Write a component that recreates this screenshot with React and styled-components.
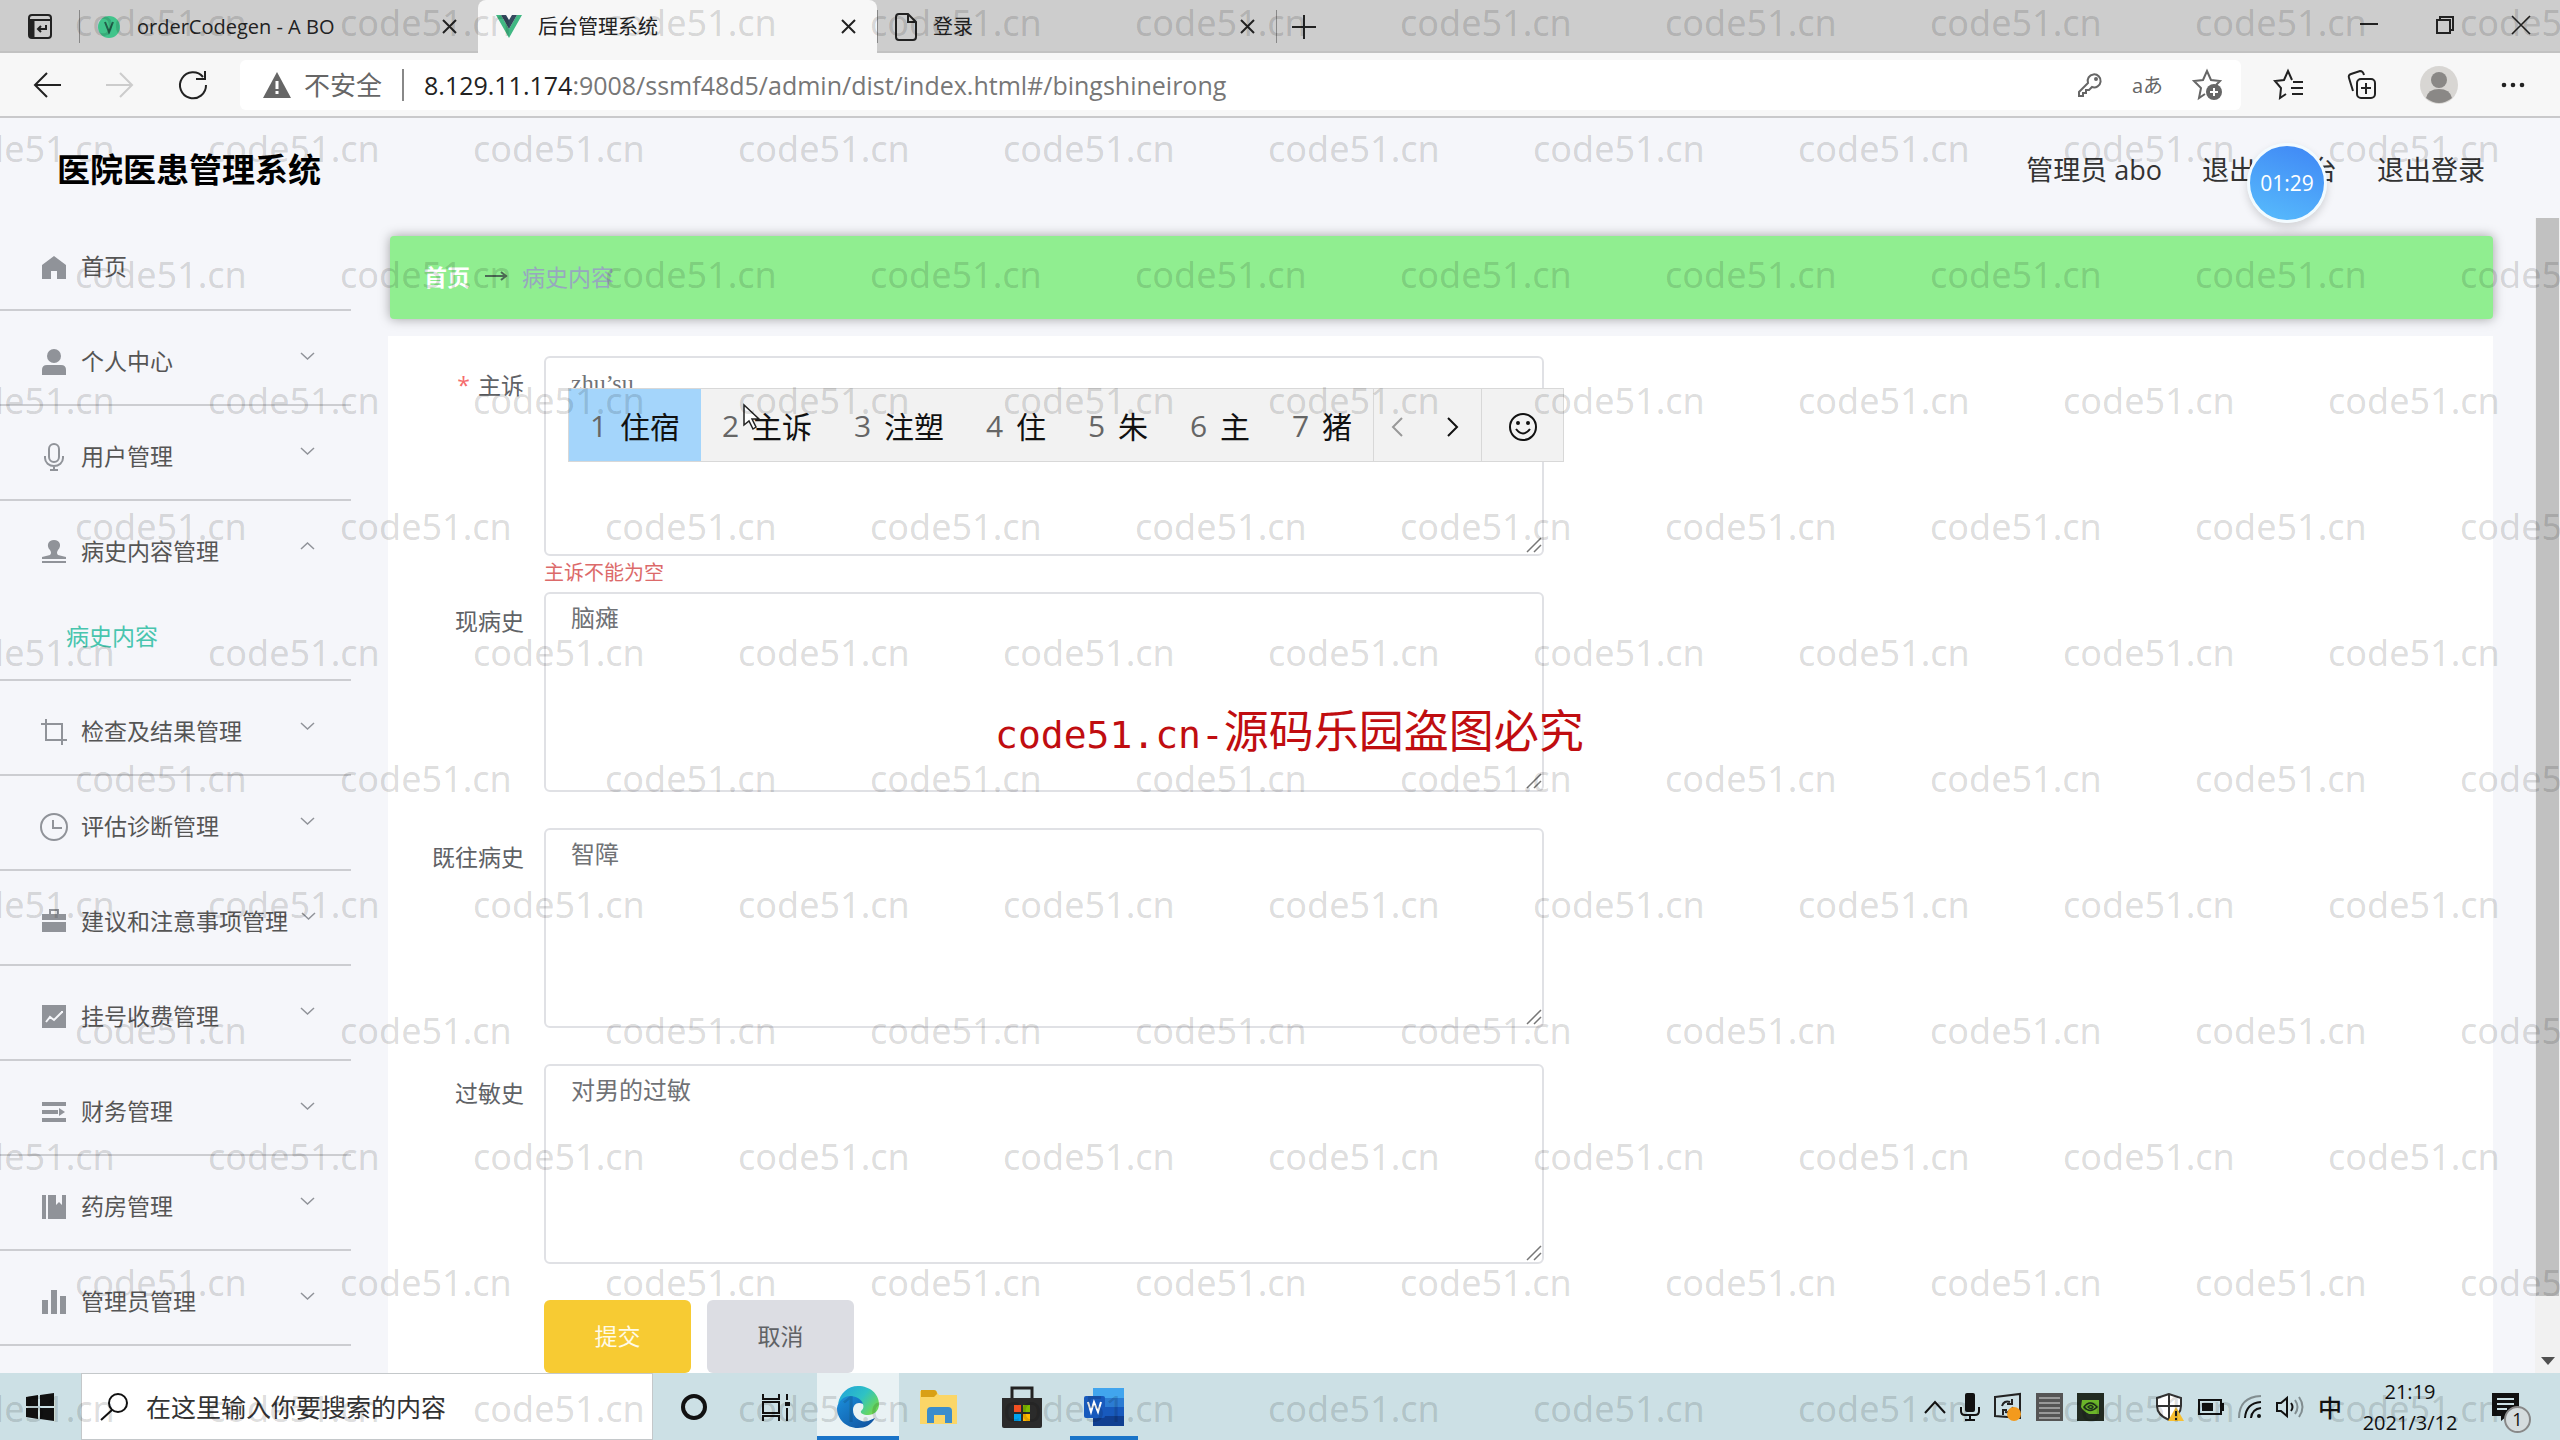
import React from 'react'
import styled, { createGlobalStyle } from 'styled-components'


const menu = [
    { icon: 'home', text: '首页' },
    { icon: 'user', text: '个人中心', more: true },
    { icon: 'mic', text: '用户管理', more: true },
    { icon: 'stamp', text: '病史内容管理', more: true, open: true, child: '病史内容' },
    { icon: 'crop', text: '检查及结果管理', more: true },
    { icon: 'clock', text: '评估诊断管理', more: true },
    { icon: 'bag', text: '建议和注意事项管理', more: true },
    { icon: 'chart', text: '挂号收费管理', more: true },
    { icon: 'list', text: '财务管理', more: true },
    { icon: 'book', text: '药房管理', more: true },
    { icon: 'bars', text: '管理员管理', more: true },
]

const fields = [
    { id: 'zhusu', label: '主诉', value: 'zhu’su', required: true, error: '主诉不能为空', ime: true },
    { id: 'xianbingshi', label: '现病史', value: '脑瘫' },
    { id: 'jiwangbingshi', label: '既往病史', value: '智障' },
    { id: 'guominshi', label: '过敏史', value: '对男的过敏' },
]

const words = ['住宿', '主诉', '注塑', '住', '朱', '主', '猪']

const menuIcons = {
    home: <path d="M12 1 24 10v14h-9v-8H9v8H0V10z" />,
    user: <><circle cx="12" cy="6" r="7" /><path d="M0 25v-5q0-5 5-5h14q5 0 5 5v5z" /></>,
    mic: <g fill="none" stroke="currentColor" strokeWidth="2"><rect x="7" y="-1" width="10" height="18" rx="5" /><path d="M3 11v2a9 8 0 0 0 18 0v-2M12 21v4M8 25h8" /></g>,
    stamp: <><path d="M8 10C4 6 6 0 12 0s8 6 4 10q-2 3 0 5l8 2v2H0v-2l8-2q2-2 0-5z" /><rect y="21" width="24" height="2" /></>,
    crop: <path d="M4-1v21h21M-1 4h21v21" fill="none" stroke="currentColor" strokeWidth="2" />,
    clock: <g fill="none" stroke="currentColor" strokeWidth="2"><circle cx="12" cy="12" r="13" /><path d="M11 5v8h9" /></g>,
    bag: <><path d="M8 4V0h8v4" fill="none" stroke="currentColor" strokeWidth="2" /><rect y="4" width="24" height="6" /><rect y="12" width="24" height="10" /></>,
    chart: <><rect width="24" height="23" /><path d="m4 17 4-5 4 3 8-8M20 6v2" fill="none" stroke="#f5f6fa" strokeWidth="2" /></>,
    list: <path d="M0 2h24v4H0zm0 8h16v4H0zm17-2 6 4-6 4zM0 18h24v4H0z" />,
    book: <path d="M0 0h4v24H0zm6 0h8v10l3-3 3 3V0h4v24H6z" />,
    bars: <path d="M0 10h6v14H0zM9 0h6v24H9zm9 6h6v18h-6z" />,
}

const Icon = ({ w = 24, h = 24, box = '0 0 24 24', line, children }) => (
    <Svg
        width={w}
        height={h}
        viewBox={box}
        fill={line ? 'none' : 'currentColor'}
        stroke={line ? 'currentColor' : 'none'}
        strokeWidth={line}
        aria-hidden="true"
    >
        {children}
    </Svg>
)

const CloseIcon = () => <Icon w={15} h={15} box="0 0 15 15" line={2}><path d="m1 1 13 13M14 1 1 14" /></Icon>

const Browser = () => (
    <>
        <TabBar>
            <TabMenu aria-label="标签页操作">
                <Icon w={26} h={26} box="0 0 26 26" line={2}>
                    <rect x="2" y="1" width="22" height="23" rx="3" />
                    <path d="M2 6h22M19 11v4h-8m3-3-3 3 3 3" />
                    <path d="M5 6v18" strokeWidth="5" />
                </Icon>
            </TabMenu>
            <Tab>
                <Icon w={24} h={24}><circle cx="12" cy="12" r="11" fill="#41c48b" /><path d="m8 7 4 10 4-10" fill="none" stroke="#22604a" strokeWidth="2" /></Icon>
                <TabText>orderCodegen - A BO</TabText>
                <TabClose aria-label="关闭"><CloseIcon /></TabClose>
            </Tab>
            <Tab $active>
                <Icon w={26} h={23} box="0 0 26 23"><path d="M0 0h5l8 14 8-14h5L13 23z" fill="#41b883" /><path d="M5 0h5l3 5 3-5h5l-8 14z" fill="#35495e" /></Icon>
                <TabText>后台管理系统</TabText>
                <TabClose aria-label="关闭"><CloseIcon /></TabClose>
            </Tab>
            <Tab>
                <Icon w={22} h={28} box="0 0 22 28" line={2}><path d="M4 1h9l8 8v15q0 3-3 3H4q-3 0-3-3V4q0-3 3-3zM13 1v8h8" /></Icon>
                <TabText>登录</TabText>
                <TabClose aria-label="关闭"><CloseIcon /></TabClose>
            </Tab>
            <NewTab aria-label="新建标签页"><Icon line={2}><path d="M12 0v24M0 12h24" /></Icon></NewTab>
            <WindowButtons>
                <button aria-label="最小化"><Icon w={18} h={18} box="0 0 18 18" line={2}><path d="M0 8h18" /></Icon></button>
                <button aria-label="还原"><Icon w={18} h={18} box="0 0 18 18" line={2}><path d="M1 4h13v13H1zM4 4V1h13v13h-3" /></Icon></button>
                <button aria-label="关闭窗口"><Icon w={18} h={18} box="0 0 18 18" line={1.6}><path d="m0 0 18 18M18 0 0 18" /></Icon></button>
            </WindowButtons>
        </TabBar>
        <Toolbar>
            <NavButtons>
                <button aria-label="后退"><Icon w={28} h={28} box="0 0 28 28" line={2}><path d="M28 14H2M14 2 2 14l12 12" /></Icon></button>
                <button aria-label="前进" disabled><Icon w={28} h={28} box="0 0 28 28" line={2}><path d="M0 14h26M14 2l12 12-12 12" /></Icon></button>
                <button aria-label="刷新"><Icon w={28} h={28} box="0 0 28 28" line={2}><path d="M24 6A13 13 0 1 0 27 14M26 0v8h-9" /></Icon></button>
            </NavButtons>
            <AddressBar>
                <Icon w={28} h={26} box="0 0 28 26"><path d="M14 0 28 26H0z" /><path d="M14 9v8m0 2v3" stroke="#fff" strokeWidth="3" /></Icon>
                <Unsafe>不安全</Unsafe>
                <Url role="textbox" aria-label="地址" contentEditable suppressContentEditableWarning spellCheck={false}>
                    <b>8.129.11.174</b>:9008/ssmf48d5/admin/dist/index.html#/bingshineirong
                </Url>
                <BarTools>
                    <button aria-label="密码"><Icon w={24} h={24} line={2}><path d="M14 14a6.500 6.500 0 1 0-4-4L1 19v4h4v-3h3v-3h3z" /><circle cx="18" cy="6" r="1" /></Icon></button>
                    <button>aあ</button>
                    <button aria-label="添加收藏"><Icon w={30} h={30} box="0 0 30 30" line={2}><path d="M12 24l-6 4 2-10-7-7 9-1 4-9 4 9 9 1-4 4" /><circle cx="21" cy="22" r="8" fill="currentColor" stroke="none" /><path d="M21 18v8M17 22h8" stroke="#fff" /></Icon></button>
                </BarTools>
            </AddressBar>
            <ToolIcons>
                <button aria-label="收藏夹"><Icon w={30} h={30} box="0 0 30 30" line={2}><path d="M12 24l-6 4 1-10-6-7 9-1 4-9 4 9M19 12h10M17 18h12M18 24h11" /></Icon></button>
                <button aria-label="集锦"><Icon w={30} h={30} box="0 0 30 30" line={2}><rect x="10" y="9" width="18" height="19" rx="4" /><path d="M19 13v11M14 18h10M6 21 2 8q-1-3 2-4l9-3q3 0 4 4" /></Icon></button>
                <button aria-label="用户"><Icon w={38} h={38} box="0 0 38 38"><circle cx="19" cy="19" r="19" fill="#d8d6d3" /><circle cx="19" cy="14" r="8" fill="#8a8886" /><path d="M6 32q2-9 13-9t13 9q-13 10-26 0z" fill="#8a8886" /></Icon></button>
                <button aria-label="更多"><Icon w={24} h={24}><circle cx="3" cy="12" r="2.300" /><circle cx="12" cy="12" r="2.300" /><circle cx="21" cy="12" r="2.300" /></Icon></button>
            </ToolIcons>
        </Toolbar>
    </>
)

const Candidates = () => (
    <Ime>
        {words.map((word, i) => (
            <Candidate key={word} $active={i === 0}><i>{i + 1}</i><span>{word}</span></Candidate>
        ))}
        <ImePager>
            <button aria-label="上一页" disabled><Icon w={12} h={20} box="0 0 12 20" line={2}><path d="m11 1-9 9 9 9" /></Icon></button>
            <button aria-label="下一页"><Icon w={12} h={20} box="0 0 12 20" line={2}><path d="m1 1 9 9-9 9" /></Icon></button>
        </ImePager>
        <ImeEmoji aria-label="表情">
            <Icon w={28} h={28} box="0 0 28 28" line={2}><circle cx="14" cy="14" r="13" /><path d="M7 16q7 9 14 0" /><circle cx="9" cy="10" r="1" /><circle cx="19" cy="10" r="1" /></Icon>
        </ImeEmoji>
        <Pointer>
            <Icon w={17} h={26} box="0 0 17 26"><path d="M1 1v20l5-4 4 8 3-2-4-8h7z" fill="#fff" stroke="#222" strokeWidth="1.500" /></Icon>
        </Pointer>
    </Ime>
)

const Sidebar = () => (
    <Side>
        {menu.map(item => (
            <MenuItem key={item.text}>
                <MenuButton>
                    <Icon w={28} h={28} box="-2 -2 28 28">{menuIcons[item.icon]}</Icon>
                    <span>{item.text}</span>
                    {item.more && (
                        <Arrow $open={item.open}>
                            <Icon w={15} h={8} box="0 0 15 8" line={1.500}><path d="m1 1 6.500 6L14 1" /></Icon>
                        </Arrow>
                    )}
                </MenuButton>
                {item.child && <SubLink href="#/bingshineirong">{item.child}</SubLink>}
            </MenuItem>
        ))}
    </Side>
)

const Form = () => (
    <FormPanel onSubmit={e => e.preventDefault()}>
        {fields.map(field => (
            <Field key={field.id}>
                <Label htmlFor={field.id}>{field.required && <em>*</em>}{field.label}</Label>
                <Control>
                    <TextArea id={field.id} defaultValue={field.value} spellCheck={false} />
                    <Grip><Icon w={16} h={16} box="0 0 16 16" line={1.500}><path d="M1 15 15 1M8 15l7-7" /></Icon></Grip>
                    {field.ime && <Candidates />}
                </Control>
                <Hint>{field.error}</Hint>
            </Field>
        ))}
        <Buttons>
            <Button $primary type="submit">提交</Button>
            <Button type="button">取消</Button>
        </Buttons>
    </FormPanel>
)

const Taskbar = () => (
    <Bar>
        <Start aria-label="开始"><Icon w={28} h={28} box="0 0 28 28"><path d="M0 4l12-2v11H0zM14 2l14-2v13H14zM0 15h12v11L0 24zM14 15h14v13l-14-2z" /></Icon></Start>
        <Search>
            <Icon w={28} h={28} box="0 0 28 28" line={2}><circle cx="18" cy="10" r="9" /><path d="M12 17 1 27" /></Icon>
            <input aria-label="搜索" placeholder="在这里输入你要搜索的内容" />
        </Search>
        <Task aria-label="Cortana"><Icon w={28} h={28} box="0 0 28 28" line={4}><circle cx="14" cy="14" r="11" /></Icon></Task>
        <Task aria-label="任务视图"><Icon w={28} h={28} box="0 0 28 28" line={2}><path d="M1 1v5h16V1M1 9h16v11H1zM1 28v-5h16v5M25 1v6M25 15v13" /><path d="M23 11h5" strokeWidth="4" /></Icon></Task>
        <Task aria-label="Edge" $active $line="82px">
            <Icon w={42} h={42} box="0 0 42 42">
                <defs>
                    <linearGradient id="edgeTop" x1="0" y1="0" x2="1" y2="0.600"><stop offset="0" stopColor="#1fa0dc" /><stop offset="0.600" stopColor="#2fc2c4" /><stop offset="1" stopColor="#6ad85a" /></linearGradient>
                    <linearGradient id="edgeLow" x1="0" y1="0" x2="1" y2="1"><stop offset="0" stopColor="#1b90dc" /><stop offset="1" stopColor="#0f4f9c" /></linearGradient>
                </defs>
                <path d="M1 18C3 7 11 0 21 0c12 0 21 8 21 18 0 7-5 11-11 11-5 0-8-2-7-4 4-3 3-8-2-11-7-4-15-3-21 4z" fill="url(#edgeTop)" />
                <path d="M0 22c1-7 7-12 13-12 7 0 12 4 13 8-6-3-10 1-10 6 0 8 8 13 15 11l7-3C34 39 28 42 21 42 9 42 0 33 0 22z" fill="url(#edgeLow)" />
            </Icon>
        </Task>
        <Task aria-label="文件资源管理器">
            <Icon w={40} h={36} box="0 0 40 36"><path d="M0 2h16l3 4h18v29H0z" fill="#fbd667" /><path d="M1 1h13q3 0 3 4l-3 3H1z" fill="#d9a016" /><path d="M7 34V22q0-4 4-4h17q4 0 4 4v12h-7v-8H14v8z" fill="#3c8dcb" /></Icon>
        </Task>
        <Task aria-label="应用商店">
            <Icon w={40} h={42} box="0 0 40 42"><path d="M10 12V2h20v10" fill="none" stroke="#222" strokeWidth="3" /><path d="M0 12h40v28q0 2-2 2H2q-2 0-2-2z" fill="#2b2b2b" /><path d="M12 19h7v7h-7z" fill="#f25022" /><path d="M21 19h7v7h-7z" fill="#7fba00" /><path d="M12 28h7v7h-7z" fill="#00a4ef" /><path d="M21 28h7v7h-7z" fill="#ffb900" /></Icon>
        </Task>
        <Task aria-label="Word" $line="68px">
            <Icon w={40} h={38} box="0 0 40 38"><path d="M9 0h31v10H9z" fill="#41a5ee" /><path d="M9 10h31v9H9z" fill="#2b7cd3" /><path d="M9 19h31v9H9z" fill="#185abd" /><path d="M9 28h31v10H9z" fill="#103f91" /><rect y="8" width="21" height="22" rx="2" fill="#185abd" /><path d="m4 14 3 10 3-10 4 10 3-10" fill="none" stroke="#fff" strokeWidth="2" /></Icon>
        </Task>
        <Tray>
            <Icon w={22} h={14} box="0 0 22 14" line={2}><path d="m1 13 10-11 10 11" /></Icon>
            <Icon w={20} h={28} box="0 0 20 28"><rect x="5" width="10" height="19" rx="2" /><path d="M1 14v4q0 4 4 4h10q4 0 4-4v-4M10 22v5M5 27h10" fill="none" stroke="currentColor" strokeWidth="2" /></Icon>
            <Icon w={28} h={28} box="0 0 28 28"><path d="M1 4 26 1v24L1 23z" fill="none" stroke="#222" strokeWidth="2" /><path d="M8 13q2-6 8-4m2-3v5h-5M19 14q-2 6-8 5m-2 3v-5h4" fill="none" stroke="#222" strokeWidth="2" /><circle cx="20" cy="21" r="7" fill="#f39a1d" /></Icon>
            <Icon w={27} h={28} box="0 0 27 28"><path d="M0 0h27v28H0z" fill="#555" /><path d="M3 5h21M3 10h21M3 15h21M3 20h21M3 25h21" stroke="#999" strokeWidth="2" /></Icon>
            <Icon w={27} h={28} box="0 0 27 28"><path d="M0 0h27v28H0z" fill="#222b22" /><path d="M5 7h17v14H12q-6-3-8-7z" fill="#6bb52a" /><path d="M7 14q6-8 13 0-7 7-13 0zm4 0q3-3 5 0-2 3-5 0z" fill="none" stroke="#1c301b" strokeWidth="1.500" /></Icon>
            <Shield><Icon w={28} h={28} box="0 0 28 28"><path d="M13 1 1 5v8q0 9 12 14 12-5 12-14V5z" fill="#fff" stroke="#333" strokeWidth="2" /><path d="M13 1v26M1 13h24" stroke="#333" strokeWidth="2" /><path d="m20 14 8 14H12z" fill="#f8c032" /><path d="M20 18v5m0 2v2" stroke="#222" strokeWidth="2" /></Icon></Shield>
            <Icon w={26} h={16} box="0 0 26 16"><path d="M1 1h22v14H1zM23 5h2v6h-2" fill="none" stroke="currentColor" strokeWidth="2" /><path d="M4 4h11v8H4z" /></Icon>
            <Icon w={24} h={24} line={2}><path d="M1 23Q1 2 23 1" opacity=".4" /><path d="M7 23Q8 8 23 7M13 23q1-9 10-10" /><circle cx="21" cy="21" r="2" fill="currentColor" stroke="none" /></Icon>
            <Icon w={28} h={24} box="0 0 28 24" line={2}><path d="M1 8h4l6-5v18l-6-5H1zM15 8q3 4 0 8" /><path d="M19 5q5 7 0 14M23 2q7 10 0 20" opacity=".4" /></Icon>
            <Lang>中</Lang>
            <Clock><span>21:19</span><span>2021/3/12</span></Clock>
            <Notice aria-label="通知">
                <Icon w={28} h={28} box="0 0 28 28"><path d="M0 0h27v23H15l-6 5v-5H0z" /><path d="M5 6h17M5 11h17M5 16h10" stroke="#cce0e5" strokeWidth="2" /></Icon>
                <Badge>1</Badge>
            </Notice>
        </Tray>
    </Bar>
)

const Watermark = () => (
    <Marks aria-hidden="true">
        {Array.from({ length: 12 }, (_, row) => (
            <MarkRow key={row} $odd={row % 2 === 1}>
                {Array.from({ length: row % 2 === 1 ? 10 : 10 }, (_, i) => <span key={i}>code51.cn</span>)}
            </MarkRow>
        ))}
        <RedMark><span>code51.cn-</span>源码乐园盗图必究</RedMark>
    </Marks>
)

const App = () => {
    return (
        <Screen>
            <GlobalStyle />
            <Browser />
            <Page>
                <Header>
                    <h1>医院医患管理系统</h1>
                    <HeaderLinks>
                        <span>管理员 abo</span>
                        <a href="#/front">退出到前台</a>
                        <a href="#/login">退出登录</a>
                        <Timer>01:29</Timer>
                    </HeaderLinks>
                </Header>
                <Body>
                    <Sidebar />
                    <Main>
                        <Breadcrumb>
                            <a href="#/">首页</a>
                            <Icon w={22} h={12} box="0 0 22 12" line={2}><path d="M0 6h21M16 2l5 4-5 4" /></Icon>
                            <span>病史内容</span>
                        </Breadcrumb>
                        <Form />
                    </Main>
                    <Scroll>
                        <Thumb />
                        <Icon w={14} h={8} box="0 0 14 8"><path d="M0 0h14L7 8z" /></Icon>
                    </Scroll>
                </Body>
            </Page>
            <Taskbar />
            <Watermark />
        </Screen>
    )
}

export default App


const GlobalStyle = createGlobalStyle`
    * {
        box-sizing: border-box;
    }
    body {
        margin: 0;
        font-family: 'Open Sans', 'Noto Sans CJK SC', sans-serif;
        color: #222;
    }
    button {
        border: 0;
        padding: 0;
        background: none;
        color: inherit;
        font: inherit;
        cursor: pointer;
    }
    a {
        color: inherit;
        text-decoration: none;
    }
`

const Svg = styled.svg`
    display: block;
    flex: none;
    overflow: visible;
`

const Screen = styled.div`
    position: relative;
    height: 100vh;
    display: flex;
    flex-direction: column;
    overflow: hidden;
`

const TabBar = styled.div`
    flex: none;
    height: 53px;
    display: flex;
    background: #cdcdcd;
    box-shadow: inset 0 -2px 0 #c2c2c2;
`

const TabMenu = styled.button`
    width: 79px;
    padding-left: 27px;
`

const Tab = styled.div`
    width: 399px;
    padding: 0 20px 0 18px;
    display: flex;
    align-items: center;
    gap: 16px;
    border-radius: ${props => props.$active ? '8px 8px 0 0' : '0'};
    background: ${props => props.$active ? '#f7f7f7' : 'linear-gradient(#888, #888) 0 10px / 1px 33px no-repeat'};
`

const TabText = styled.span`
    flex: 1;
    font-size: 20px;
    line-height: 28px;
    white-space: nowrap;
`

const TabClose = styled.button`
    width: 16px;
`

const NewTab = styled.button`
    padding: 0 16px;
    height: 53px;
    background: linear-gradient(#888, #888) 0 10px / 1px 33px no-repeat;
`

const WindowButtons = styled.div`
    margin-left: auto;
    padding: 0 30px 4px 0;
    display: flex;
    align-items: center;
    gap: 58px;
`

const Toolbar = styled.div`
    flex: none;
    height: 65px;
    padding: 0 35px 0 33px;
    display: flex;
    align-items: center;
    background: #f7f7f7;
    border-bottom: 2px solid #c9c9cb;
`

const NavButtons = styled.div`
    width: 207px;
    display: flex;
    gap: 45px;
    button:disabled {
        color: #ccc;
    }
`

const AddressBar = styled.div`
    flex: 1;
    height: 50px;
    padding: 0 18px 0 23px;
    display: flex;
    align-items: center;
    background: white;
    border-radius: 6px;
    color: #666;
`

const Unsafe = styled.span`
    margin: 0 20px 0 13px;
    font-size: 26px;
    line-height: 36px;
`

const Url = styled.div`
    flex: 1;
    padding-left: 20px;
    border-left: 2px solid #888;
    font-size: 25px;
    line-height: 32px;
    color: #777;
    b {
        font-weight: 400;
        color: #222;
    }
`

const BarTools = styled.div`
    display: flex;
    align-items: center;
    gap: 30px;
    font-size: 20px;
`

const ToolIcons = styled.div`
    margin-left: 33px;
    display: flex;
    align-items: center;
    gap: 43px;
`

const Page = styled.div`
    flex: 1;
    min-height: 0;
    display: flex;
    flex-direction: column;
    background: #f5f6fa;
`

const Header = styled.header`
    flex: none;
    height: 98px;
    padding: 6px 75px 0 57px;
    display: flex;
    align-items: center;
    justify-content: space-between;
    h1 {
        margin: 0;
        font-size: 33px;
        line-height: 48px;
        color: #000;
    }
`

const HeaderLinks = styled.div`
    position: relative;
    display: flex;
    gap: 40px;
    font-size: 27px;
    line-height: 40px;
    color: #333;
`

const Timer = styled.div`
    position: absolute;
    right: 158px;
    top: -7px;
    width: 80px;
    height: 80px;
    border-radius: 50%;
    border: 3px solid #f2fbff;
    background: linear-gradient(200deg, #3f86f5, #58bdfc);
    box-shadow: 0 4px 8px rgba(0,0,0,.15);
    color: white;
    font-size: 21px;
    line-height: 74px;
    text-align: center;
`

const Body = styled.div`
    flex: 1;
    min-height: 0;
    display: flex;
    overflow: hidden;
`

const Side = styled.nav`
    flex: none;
    width: 351px;
`

const MenuItem = styled.div`
    border-bottom: 2px solid #cccdd1;
`

const MenuButton = styled.button`
    width: 100%;
    height: 93px;
    padding: 8px 36px 0 40px;
    display: flex;
    align-items: center;
    gap: 13px;
    color: #909399;
    font-size: 23px;
    text-align: left;
    white-space: nowrap;
    span {
        flex: 1;
        padding-bottom: 4px;
        color: #555;
    }
`

const Arrow = styled.i`
    padding-bottom: 12px;
    svg {
        transform: ${props => props.$open ? 'rotate(180deg)' : 'none'};
    }
`

const SubLink = styled.a`
    display: block;
    padding: 0 66px;
    font-size: 23px;
    line-height: 85px;
    color: #48c5ae;
`

const Main = styled.main`
    flex: 1;
    margin: 0 42px 0 37px;
    padding-top: 20px;
    display: flex;
    flex-direction: column;
    gap: 17px;
`

const Breadcrumb = styled.div`
    flex: none;
    height: 83px;
    margin-left: 2px;
    padding: 0 34px 3px;
    display: flex;
    align-items: center;
    gap: 15px;
    background: #90ee90;
    border-radius: 4px;
    box-shadow: 0 0 12px rgba(0,0,0,.35);
    font-size: 23px;
    color: #97a8be;
    a {
        font-weight: 700;
        color: white;
    }
    svg {
        color: #4c6a55;
    }
`

const FormPanel = styled.form`
    flex: 1;
    padding-top: 20px;
    background: white;
`

const Field = styled.div`
    display: grid;
    grid-template-columns: 156px minmax(0, 1000px);
`

const Label = styled.label`
    padding: 11px 20px 0 0;
    font-size: 23px;
    line-height: 36px;
    text-align: right;
    color: #606266;
    em {
        margin-right: 8px;
        font-style: normal;
        color: #f56c6c;
    }
`

const Control = styled.div`
    position: relative;
    height: 200px;
`

const TextArea = styled.textarea`
    display: block;
    width: 100%;
    height: 200px;
    padding: 8px 25px;
    border: 2px solid #e0e1e5;
    border-radius: 6px;
    resize: none;
    outline: none;
    background: white;
    font-family: 'Liberation Serif', 'Noto Sans CJK SC', serif;
    font-size: 24px;
    line-height: 34px;
    color: #707276;
`

const Grip = styled.span`
    position: absolute;
    right: 2px;
    bottom: 3px;
    color: #777;
`

const Hint = styled.div`
    grid-column: 2;
    height: 36px;
    font-size: 20px;
    line-height: 34px;
    color: #dc6a6a;
`

const Ime = styled.div`
    position: absolute;
    left: 24px;
    top: 32px;
    height: 74px;
    display: flex;
    background: #f2f2f2;
    border: 1px solid #d8d8d8;
    font-size: 30px;
    color: #111;
`

const Candidate = styled.button`
    padding: 0 21px;
    display: flex;
    align-items: center;
    gap: 14px;
    white-space: nowrap;
    background: ${props => props.$active ? '#a4d5fb' : 'none'};
    i {
        width: 16px;
        font-style: normal;
        color: #666;
    }
`

const ImePager = styled.div`
    width: 108px;
    padding: 4px 22px 0 17px;
    display: flex;
    align-items: center;
    justify-content: space-between;
    border-left: 1px solid #d8d8d8;
    button:disabled {
        color: #999;
    }
`

const ImeEmoji = styled.button`
    width: 82px;
    padding: 4px 0 0 27px;
    border-left: 1px solid #d8d8d8;
`

const Pointer = styled.span`
    position: absolute;
    left: 174px;
    top: 15px;
`

const Buttons = styled.div`
    padding-left: 156px;
    display: flex;
    gap: 16px;
`

const Button = styled.button`
    width: 147px;
    height: 73px;
    padding-bottom: 3px;
    border-radius: 6px;
    font-size: 23px;
    color: ${props => props.$primary ? '#fffbe8' : '#606266'};
    background: ${props => props.$primary ? '#f7cb33' : '#dcdde3'};
`

const Scroll = styled.div`
    flex: none;
    width: 25px;
    margin-top: 2px;
    padding-bottom: 8px;
    display: flex;
    flex-direction: column;
    align-items: center;
    justify-content: space-between;
    background: #f1f1f1;
    color: #505050;
`

const Thumb = styled.div`
    width: 23px;
    height: 94%;
    background: #c1c1c1;
`

const Bar = styled.footer`
    flex: none;
    height: 67px;
    display: flex;
    align-items: center;
    background: #cce0e5;
    color: #111;
`

const Start = styled.button`
    width: 81px;
    padding-left: 26px;
`

const Search = styled.label`
    width: 572px;
    height: 67px;
    padding: 0 18px;
    display: flex;
    align-items: center;
    gap: 18px;
    background: white;
    border: 1px solid #c4c8ca;
    input {
        flex: 1;
        border: 0;
        padding: 0;
        outline: none;
        font: inherit;
        font-size: 25px;
        line-height: 36px;
    }
    input::placeholder {
        color: #333;
    }
`

const Task = styled.button`
    width: 82px;
    height: 67px;
    display: flex;
    align-items: center;
    justify-content: center;
    background-color: ${props => props.$active ? '#e9f2f4' : 'transparent'};
    background-image: linear-gradient(#1a74c8, #1a74c8);
    background-repeat: no-repeat;
    background-position: center bottom;
    background-size: ${props => props.$line || '0'} 4px;
`

const Tray = styled.div`
    margin-left: auto;
    padding-right: 40px;
    display: flex;
    align-items: center;
    gap: 14px;
`

const Shield = styled.span`
    margin-left: 38px;
`

const Lang = styled.span`
    font-size: 24px;
    font-weight: 500;
`

const Clock = styled.div`
    width: 108px;
    display: flex;
    flex-direction: column;
    align-items: center;
    font-size: 20px;
    line-height: 31px;
`

const Notice = styled.button`
    position: relative;
    margin-left: 14px;
`

const Badge = styled.span`
    position: absolute;
    left: 12px;
    top: 13px;
    width: 27px;
    height: 27px;
    border: 2px solid #888;
    border-radius: 50%;
    background: #d5dcde;
    font-size: 18px;
    line-height: 23px;
`

const Marks = styled.div`
    position: absolute;
    inset: 0;
    overflow: hidden;
    pointer-events: none;
`

const MarkRow = styled.div`
    height: 126px;
    padding-left: ${props => props.$odd ? '0' : '75px'};
    display: flex;
    font-family: 'Noto Sans', sans-serif;
    font-size: 36px;
    line-height: 46px;
    color: rgba(0,0,0,.15);
    span {
        flex: none;
        width: 265px;
    }
    span:first-child {
        margin-left: ${props => props.$odd ? '-57px' : '0'};
    }
`

const RedMark = styled.div`
    position: absolute;
    left: 995px;
    top: 697px;
    display: flex;
    align-items: baseline;
    font-family: 'Noto Sans CJK SC', sans-serif;
    font-size: 45px;
    line-height: 64px;
    color: #c00d10;
    span {
        font-family: 'DejaVu Sans Mono', monospace;
        font-size: 38px;
    }
`
